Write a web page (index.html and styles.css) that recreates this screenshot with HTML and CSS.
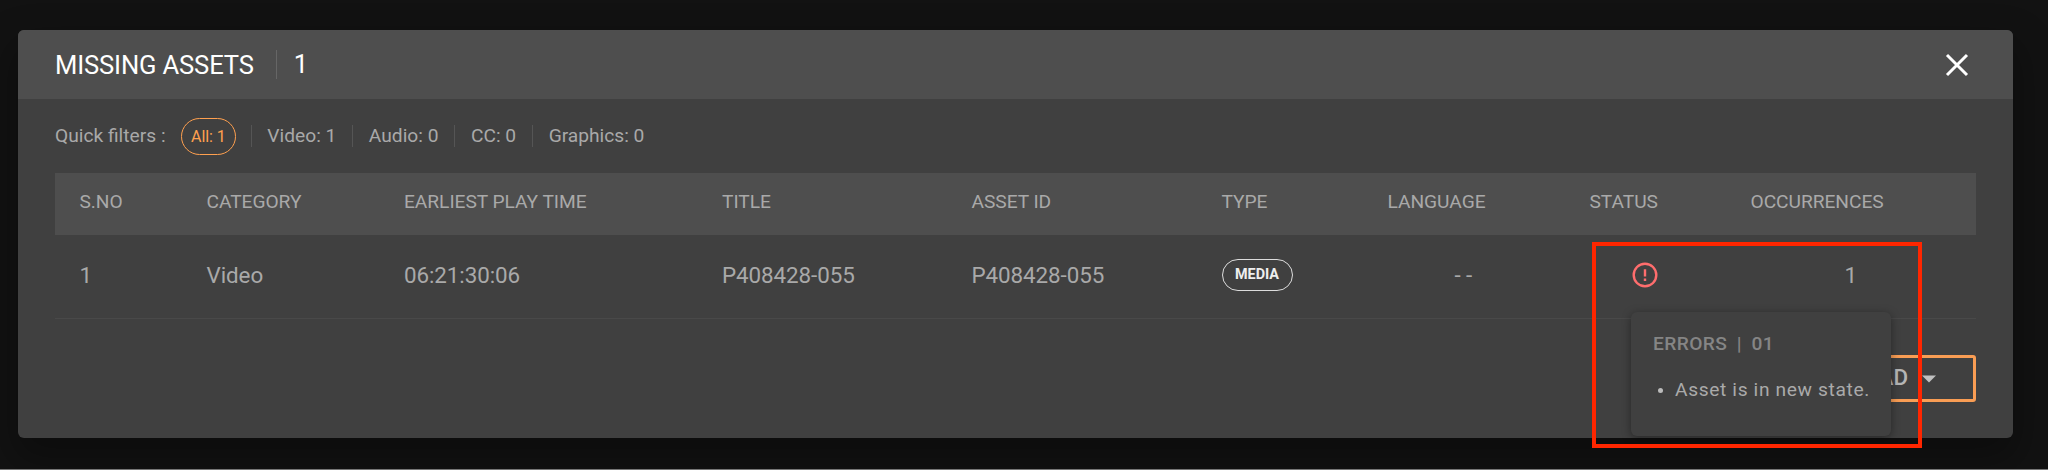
FILE: index.html
```html
<!DOCTYPE html>
<html lang="en">
<head>
<meta charset="utf-8">
<title>Missing Assets</title>
<link rel="stylesheet" href="styles.css">
</head>
<body>
<main class="modal">
  <header class="modal-header">
    <h1 class="title">MISSING ASSETS</h1>
    <span class="count">1</span>
    <svg class="close" viewBox="0 0 24 24"><path d="M2 2L22 22M22 2L2 22"/></svg>
  </header>
  <nav class="filters">
    <span class="label">Quick filters :</span>
    <span class="pill">All: 1</span>
    <span class="filter">Video: 1</span>
    <span class="filter">Audio: 0</span>
    <span class="filter">CC: 0</span>
    <span class="filter">Graphics: 0</span>
  </nav>
  <section class="table">
    <div class="row head">
      <span>S.NO</span><span>CATEGORY</span><span>EARLIEST PLAY TIME</span><span>TITLE</span><span>ASSET ID</span><span>TYPE</span><span>LANGUAGE</span><span>STATUS</span><span>OCCURRENCES</span>
    </div>
    <div class="row body">
      <span>1</span><span>Video</span><span>06:21:30:06</span><span>P408428-055</span><span>P408428-055</span>
      <span class="type"><b class="media">MEDIA</b></span>
      <span class="language">- -</span>
      <span class="status"><svg class="error" viewBox="0 0 26 26"><circle cx="13" cy="13" r="11.3"/><path d="M13 7.2v7.3M13 16.5v2.5"/></svg></span>
      <span class="occurrences">1</span>
    </div>
  </section>
  <footer class="actions">
    <button class="download">DOWNLOAD<svg class="caret" viewBox="0 0 14 7"><path d="M0 0h14L7 7z"/></svg></button>
  </footer>
</main>
<aside class="tooltip">
  <div class="tooltip-title"><span>ERRORS</span><span>|</span><span>01</span></div>
  <ul class="errors"><li>Asset is in new state.</li></ul>
</aside>
<div class="highlight"></div>
</body>
</html>
```
FILE: styles.css
```css
* { box-sizing: border-box; }
body {
  margin: 0;
  height: 470px;
  padding: 30px 35px 0 17.5px;
  overflow: hidden;
  background: #121212;
  border-bottom: 1px solid #777;
  font-family: Roboto, "Liberation Sans", sans-serif;
  color: #a9a9a9;
  position: relative;
}
.modal {
  height: 407.5px;
  background: #404040;
  border-radius: 6px;
  overflow: hidden;
  box-shadow: 0 18px 38px 5px rgba(0, 0, 0, .3);
}
.modal-header {
  display: flex;
  align-items: center;
  height: 69px;
  padding: 0 44px 0 37.5px;
  background: #4e4e4e;
  color: #fff;
  font-size: 25.6px;
}
.title { margin: 0; font-size: 25.6px; font-weight: 400; line-height: 30px; letter-spacing: -.15px; }
.count {
  margin-left: 22px;
  padding-left: 17px;
  border-left: 1.6px solid #666;
  line-height: 29px;
}
.close { width: 24px; height: 24px; margin-left: auto; }
.close path { stroke: #fff; stroke-width: 3; fill: none; }
.filters {
  display: flex;
  align-items: center;
  height: 74px;
  padding-left: 37.5px;
  font-size: 19.2px;
  line-height: 22px;
}
.pill {
  height: 37px;
  margin: 0 15px 0 15.5px;
  padding: 0 9px;
  border: 1.6px solid #ffa04f;
  border-radius: 19px;
  font-size: 16px;
  line-height: 36px;
  letter-spacing: -.05px;
  color: #ffa04f;
}
.filter { padding: 0 16px 0 15.5px; border-left: 1.6px solid #555; }
.table { margin: 0 37px 0 37.5px; }
.row {
  display: grid;
  grid-template-columns: 127px 197.5px 318px 249.5px 250px 166px 202px 161px 1fr;
  align-items: center;
  padding-left: 24.5px;
}
.head { height: 62px; padding-bottom: 5px; background: #4e4e4e; font-size: 19.2px; letter-spacing: -.05px; }
.body { height: 84px; padding-bottom: 3px; border-bottom: 1.6px solid #494949; font-size: 22.4px; letter-spacing: -.08px; }
.type { display: flex; }
.media {
  height: 32px;
  width: 71px;
  border: 1.6px solid #ddd;
  border-radius: 16px;
  text-align: center;
  font-size: 14.4px;
  line-height: 30px;
  letter-spacing: 0;
  color: #eee;
}
.language { padding-left: 67px; }
.status { display: flex; padding-left: 42px; }
.error { width: 26px; height: 26px; fill: none; stroke: #ff6d6d; stroke-width: 2.4; }
.occurrences { padding-left: 94px; }
.actions { display: flex; justify-content: flex-end; padding: 35.5px 37px 0 0; }
.download {
  display: flex;
  align-items: center;
  width: 222px;
  height: 47px;
  padding: 0 37px 2px 0;
  justify-content: flex-end;
  gap: 14px;
  background: none;
  border: 3px solid #f99d54;
  border-radius: 3px;
  color: #b5b5b5;
  font: 500 22.4px Roboto, "Liberation Sans", sans-serif;
}
.caret { width: 14px; height: 8px; fill: #c0c0c0; margin-top: 3px; }
.tooltip {
  position: absolute;
  left: 1631px;
  top: 312px;
  width: 260px;
  height: 124px;
  padding: 20px 0 0 21px;
  border-radius: 6px;
  background: #404040;
  box-shadow: 0 2px 10px rgba(0, 0, 0, .4);
  font-size: 19.2px;
  letter-spacing: .64px;
}
.tooltip-title { display: flex; gap: 9.5px; padding-left: 1px; font-weight: 500; color: #858585; line-height: 23px; letter-spacing: .4px; }
.errors {
  list-style: none;
  margin: 23px 0 0;
  padding: 0 0 0 6px;
  line-height: 24px;
  color: #aaa;
}
.errors li { display: flex; align-items: center; gap: 12px; white-space: nowrap; }
.errors li::before { content: ""; width: 5px; height: 5px; border-radius: 50%; background: #bbb; }
.highlight {
  position: absolute;
  left: 1592px;
  top: 242px;
  width: 330px;
  height: 206px;
  border: 4px solid #ff2600;
}
```
